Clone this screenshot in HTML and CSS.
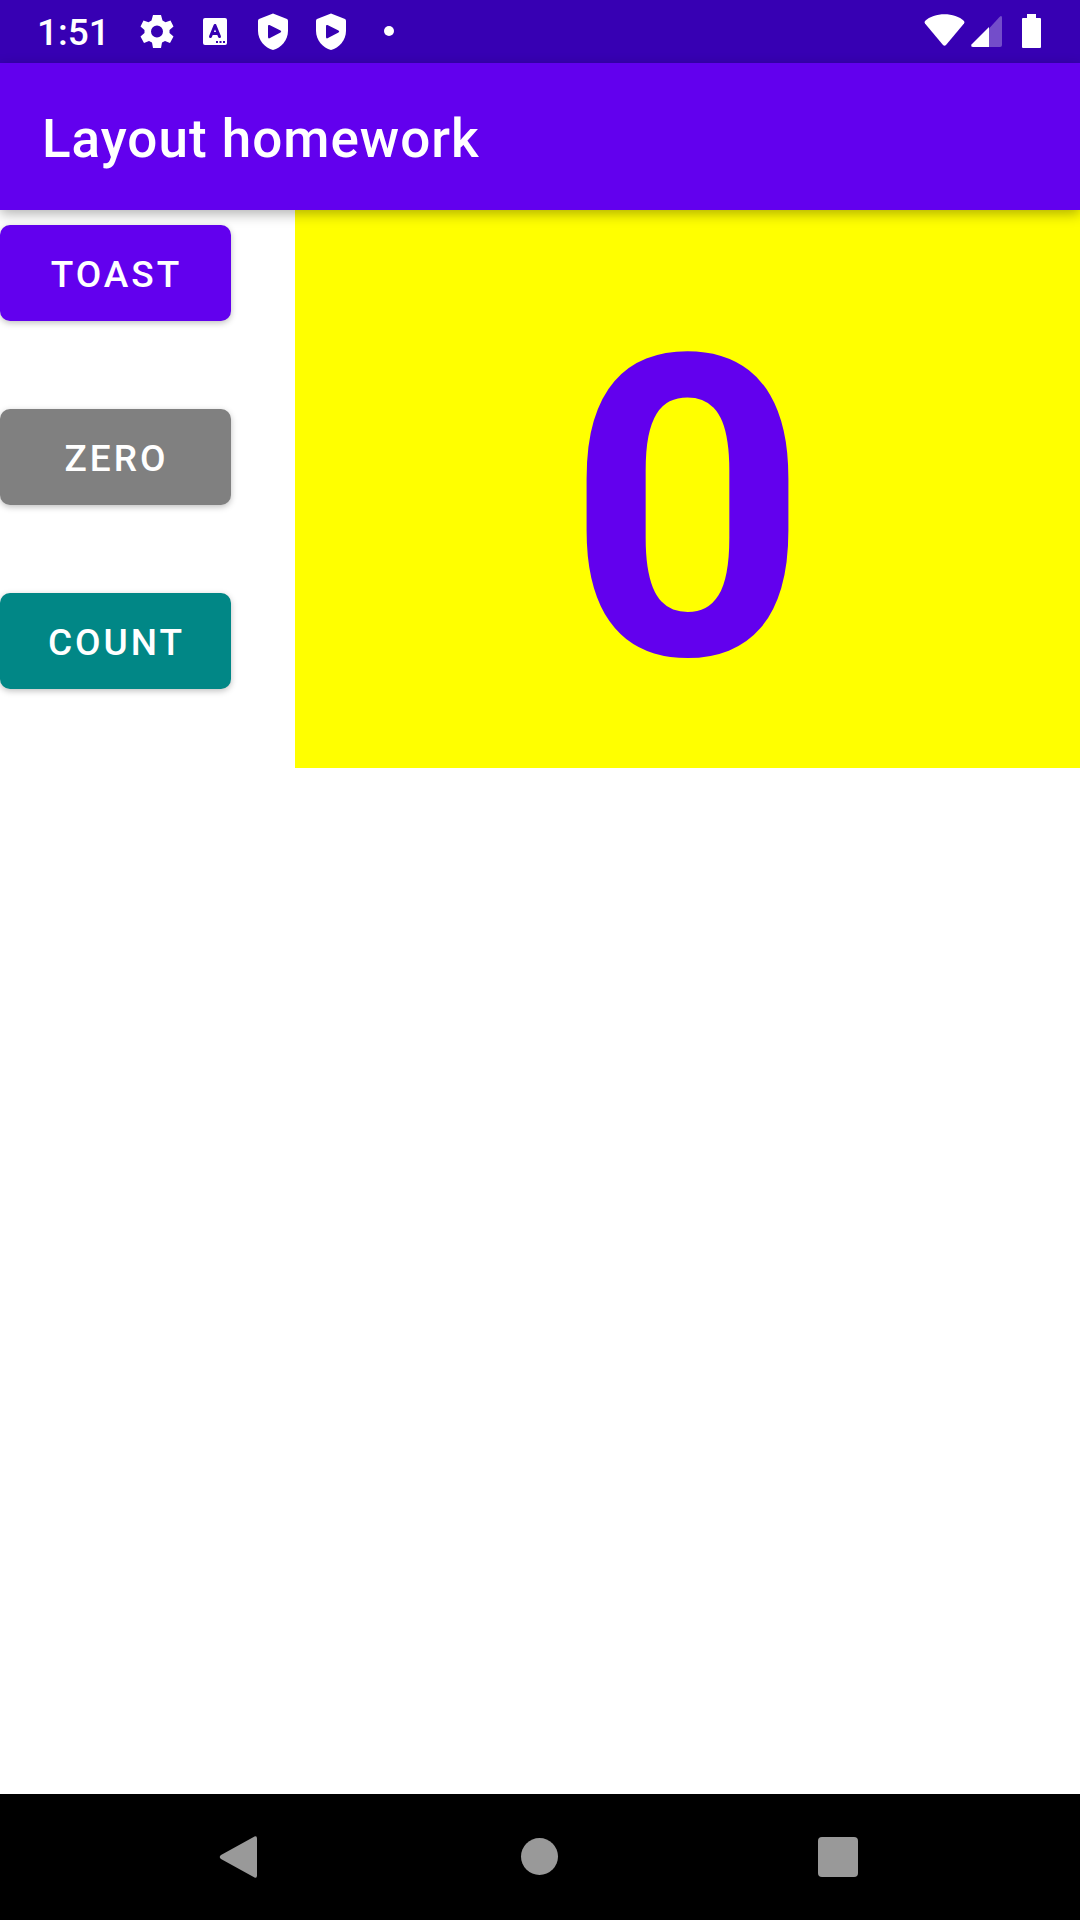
FILE: index.html
```html
<!DOCTYPE html>
<html lang="en">
<head>
<meta charset="utf-8">
<meta name="viewport" content="width=device-width, initial-scale=1">
<title>Layout homework</title>
<link rel="stylesheet" href="styles.css">
</head>
<body>
<div class="screen">
  <div class="status-bar">
    <time class="clock">1:51</time>
    <div class="notifications">
      <svg class="notice" viewBox="0 0 58 63" aria-hidden="true">
        <path fill="#fff" fill-rule="evenodd" d="M25 15H33L34.500 20.500L37.500 22.200L42.500 20.500L45.500 26.500L41.500 30V33L45.500 36.500L42 43L37 41L34 42.500L33 48H25L24 42.500L21 41L16 43L12.500 36.500L16.500 33V30L12.500 26.500L15.500 20.500L20.500 22.200L23.500 20.500ZM29 25.500A6 6 0 1 0 29 37.500A6 6 0 1 0 29 25.500Z"/>
      </svg>
      <svg class="notice" viewBox="0 0 58 63" aria-hidden="true">
        <rect x="17" y="18" width="24" height="27" rx="2" fill="#fff"/>
        <path d="M24.500 36.500L29 25.500L33.500 36.500M26 33.500H32" fill="none" stroke="#3700b3" stroke-width="3" stroke-linecap="round" stroke-linejoin="round"/>
        <path d="M30 41h2v2h-2zM33.500 41h2v2h-2zM37 41h2v2h-2z" fill="#3700b3"/>
      </svg>
      <svg class="notice" viewBox="0 0 58 63" aria-hidden="true">
        <path fill="#fff" d="M29 13.500L43 19Q44 19.500 44 21V31C44 40 37 48 29 50C21 48 14 40 14 31V21Q14 19.500 15 19Z"/>
        <path fill="#3700b3" d="M24 26Q24 24.500 25.500 25L36.500 30.500Q38 31.500 36.500 32.500L25.500 38.300Q24 38.800 24 37Z"/>
      </svg>
      <svg class="notice" viewBox="0 0 58 63" aria-hidden="true">
        <path fill="#fff" d="M29 13.500L43 19Q44 19.500 44 21V31C44 40 37 48 29 50C21 48 14 40 14 31V21Q14 19.500 15 19Z"/>
        <path fill="#3700b3" d="M24 26Q24 24.500 25.500 25L36.500 30.500Q38 31.500 36.500 32.500L25.500 38.300Q24 38.800 24 37Z"/>
      </svg>
      <svg class="notice" viewBox="0 0 58 63" aria-hidden="true">
        <circle cx="29" cy="31" r="5" fill="#fff"/>
      </svg>
    </div>
    <svg class="signals" viewBox="0 0 120 63" aria-hidden="true">
      <path fill="#fff" d="M1 21C10 12 31 12 40 21Q41 22 40 23.500L22 45Q20.500 46.500 19 45L1 23.500Q0 22 1 21Z"/>
      <path fill="#fff" opacity=".3" d="M65 28.500L75.500 17Q78 14.800 78 18V45Q78 47 76 47H65Z"/>
      <path fill="#fff" d="M65 27V47H49Q46.500 47 47.500 44.500Z"/>
      <path fill="#fff" d="M103 14H112V18H116Q117 18 117 19V47Q117 48 116 48H99Q98 48 98 47V19Q98 18 99 18H103Z"/>
    </svg>
  </div>
  <header class="app-bar"><h1 class="title">Layout homework</h1></header>
  <main class="content">
    <div class="actions">
      <button class="action" type="button">TOAST</button>
      <button class="action action-zero" type="button">ZERO</button>
      <button class="action action-count" type="button">COUNT</button>
    </div>
    <output class="counter">0</output>
  </main>
  <nav class="nav-bar" aria-label="System">
    <button class="nav-button" type="button" aria-label="Back">
      <svg class="nav-icon" viewBox="0 0 54 54"><path fill="#999" d="M40.500 6.500Q43 5.500 43 8.500V45.500Q43 48.500 40.500 47.500L7 29Q4.500 27 7 25Z"/></svg>
    </button>
    <button class="nav-button" type="button" aria-label="Home">
      <svg class="nav-icon" viewBox="0 0 54 54"><circle cx="26.500" cy="26.500" r="18.500" fill="#999"/></svg>
    </button>
    <button class="nav-button" type="button" aria-label="Recent apps">
      <svg class="nav-icon" viewBox="0 0 54 54"><rect x="6" y="7" width="40" height="40" rx="4" fill="#999"/></svg>
    </button>
  </nav>
</div>
</body>
</html>
```
FILE: styles.css
```css
* { box-sizing: border-box; }

body {
  margin: 0;
  background: #fff;
  color: #fff;
  font-family: Roboto, "Noto Sans", sans-serif;
}

.screen {
  display: flex;
  flex-direction: column;
  min-height: 100vh;
}

.status-bar {
  display: flex;
  align-items: center;
  height: 63px;
  padding: 0 36px 0 37px;
  background: #3700b3;
}

.clock {
  width: 91px;
  padding-top: 3px;
  font-size: 37px;
  font-weight: 500;
  line-height: 60px;
}

.notifications { display: flex; }

.notice {
  display: block;
  width: 58px;
  height: 63px;
}

.signals {
  display: block;
  width: 120px;
  height: 63px;
  margin-left: auto;
}

.app-bar {
  display: flex;
  align-items: center;
  height: 147px;
  padding: 4px 42px 0;
  background: #6200ee;
  box-shadow: 0 4px 12px rgba(0, 0, 0, .3);
  z-index: 1;
}

.title {
  margin: 0;
  font-size: 53px;
  font-weight: 500;
  line-height: 62px;
  letter-spacing: 1px;
}

.content {
  display: flex;
  align-items: flex-start;
  flex: 1;
}

.actions {
  display: flex;
  flex-direction: column;
  align-items: flex-start;
  gap: 88px;
  width: 295px;
  padding-top: 15px;
}

.action {
  width: 231px;
  height: 96px;
  padding: 2px 0 0 2px;
  border: 0;
  border-radius: 10px;
  background: #6200ee;
  box-shadow: 0 2px 6px rgba(0, 0, 0, .25);
  color: #fff;
  font-family: inherit;
  font-size: 37px;
  font-weight: 500;
  letter-spacing: 3px;
}

.action-zero { background: #808080; }

.action-count { background: #018786; }

.counter {
  flex: 1;
  padding-top: 44px;
  background: #ff0;
  color: #6200ee;
  font-size: 420px;
  font-weight: 700;
  line-height: 514px;
  text-align: center;
}

.nav-bar {
  display: flex;
  height: 126px;
  padding: 0 92px;
  background: #000;
}

.nav-button {
  display: flex;
  flex: 1;
  align-items: center;
  justify-content: center;
  padding: 0;
  border: 0;
  background: none;
}

.nav-icon {
  width: 54px;
  height: 54px;
}
```
